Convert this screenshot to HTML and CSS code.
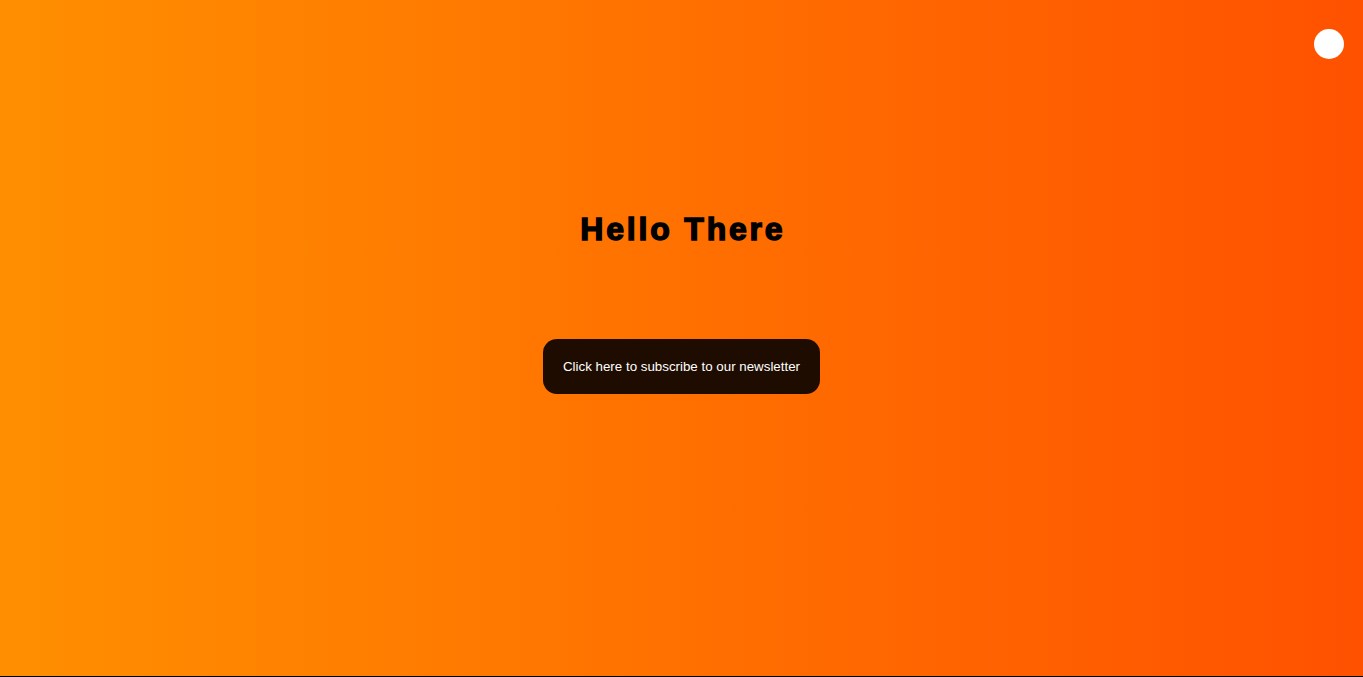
FILE: index.html
```html
<!DOCTYPE html>
<html lang="en">
<head>
<meta charset="utf-8">
<title>Hello There</title>
<link rel="stylesheet" href="styles.css">
</head>
<body>
<main class="page">
  <span class="toggle" aria-hidden="true"></span>
  <h1 class="title">Hello There</h1>
  <button class="subscribe" type="button">Click here to subscribe to our newsletter</button>
</main>
</body>
</html>
```

FILE: styles.css
```css
html, body {
  margin: 0;
  padding: 0;
}

body {
  font-family: "Liberation Sans", Arial, sans-serif;
}

.page {
  position: relative;
  box-sizing: border-box;
  height: 677px;
  border-bottom: 1px solid #000;
  background: linear-gradient(to right, #ff8f00, #ff5100);
  display: flex;
  flex-direction: column;
  align-items: center;
  padding-top: 211px;
  gap: 91px;
}

.toggle {
  position: absolute;
  top: 29px;
  right: 19px;
  width: 30px;
  height: 30px;
  border-radius: 50%;
  background: #fff;
}

.title {
  margin: 0;
  font-family: "Liberation Sans", Arial, sans-serif;
  font-size: 32px;
  font-weight: 700;
  line-height: 37px;
  letter-spacing: 2.8px;
  margin-right: -2.8px;
  -webkit-text-stroke: 1.4px #000;
  color: #000;
}

.subscribe {
  border: none;
  border-radius: 14px;
  background: #1e0c00;
  color: #fff;
  font-family: "Liberation Sans", Arial, sans-serif;
  font-size: 13.333px;
  line-height: 15px;
  padding: 20px;
  cursor: pointer;
}
```
